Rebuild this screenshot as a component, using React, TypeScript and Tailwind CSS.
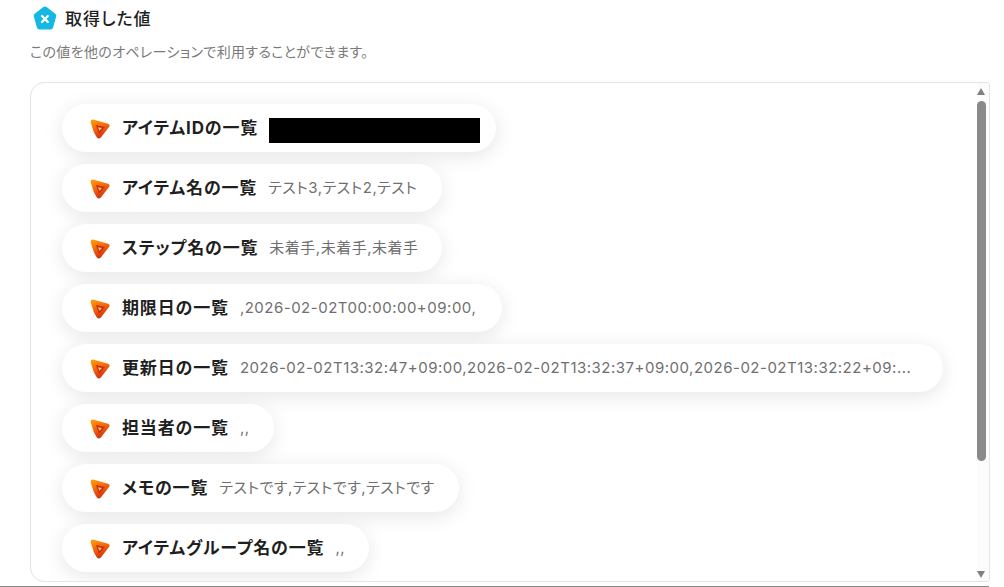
const rows: { label: string; value?: string; w: string; black?: boolean }[] = [
  { label: "アイテムIDの一覧", black: true, w: "w-[434px]" },
  { label: "アイテム名の一覧", value: "テスト3,テスト2,テスト", w: "w-[380px]" },
  { label: "ステップ名の一覧", value: "未着手,未着手,未着手", w: "w-[380px]" },
  { label: "期限日の一覧", value: ",2026-02-02T00:00:00+09:00,", w: "w-[440px]" },
  { label: "更新日の一覧", value: "2026-02-02T13:32:47+09:00,2026-02-02T13:32:37+09:00,2026-02-02T13:32:22+09:...", w: "w-[881px]" },
  { label: "担当者の一覧", value: ",,", w: "w-[212px]" },
  { label: "メモの一覧", value: "テストです,テストです,テストです", w: "w-[397px]" },
  { label: "アイテムグループ名の一覧", value: ",,", w: "w-[307px]" },
];

function PlayIcon() {
  return (
    <svg width="20" height="20" viewBox="0 0 20 20" className="shrink-0 mt-[2px]">
      <defs>
        <linearGradient id="g" x1="0.1" y1="0" x2="0.5" y2="1">
          <stop offset="0" stopColor="#ffa00c" />
          <stop offset="0.5" stopColor="#f4640a" />
          <stop offset="1" stopColor="#cf300c" />
        </linearGradient>
      </defs>
      <path d="M0.6 3 Q0.4 0.3 3.2 0.6 L18 4.8 Q20.6 5.8 19 8 L10.8 18.4 Q8.6 20.5 6.9 18.4 Q4.8 15.6 3.6 12.6 Z" fill="url(#g)" />
      <path d="M6 6 L15 8 L9 14.8 Z" fill="#c4300c" />
      <path d="M8 8.2 L12 9.1 L9.4 12 Z" fill="#ffb27a" />
    </svg>
  );
}

export default function App() {
  return (
    <div className="h-[587px] w-[1004px] overflow-hidden bg-white text-[#1f1f1f] [font-feature-settings:'palt']" style={{ fontFamily: '"Inter", "Noto Sans CJK JP", sans-serif' }}>
      <div className="pl-[33px] pt-[7px] flex items-center gap-[8px] h-[31px]">
        <svg width="24" height="24" viewBox="0 0 24 24" className="shrink-0 mb-[2px]">
          <path d="M10.4 1 Q12 0 13.6 1 L22.3 7.8 Q23.6 8.9 23.2 10.6 L20 21.8 Q19.5 23.6 17.8 23.6 L6.2 23.6 Q4.5 23.6 4 21.8 L0.8 10.6 Q0.4 8.9 1.7 7.8 Z" fill="#13b8e4" />
          <path d="M9 10 L14.8 16 M14.8 10 L9 16" stroke="#fff" strokeWidth="2.3" strokeLinecap="round" />
        </svg>
        <span className="text-[17px] font-medium leading-none tracking-[1px]">取得した値</span>
      </div>
      <p className="ml-[30px] mt-[12px] text-[14px] leading-[18px] tracking-[0.35px] text-[#7a7a7a]">この値を他のオペレーションで利用することができます。</p>
      <div className="ml-[30px] mt-[21px] w-[960px] h-[500px] border border-[#e4e4e4] rounded-l-[14px] rounded-r-[3px] flex overflow-hidden">
        <div className="flex-1 min-w-0 pl-[31px] pt-[21px] flex flex-col gap-[12px]">
          {rows.map((r) => (
            <div key={r.label} className={`${r.w} h-[48px] shrink-0 rounded-full bg-white flex items-center pl-[28px] shadow-[0_4px_20px_rgba(0,0,0,0.1)]`}>
              <PlayIcon />
              <span className="ml-[12px] text-[17px] font-bold leading-none tracking-[0.85px] whitespace-nowrap">{r.label}</span>
              {r.black ? (
                <span className="ml-[11px] w-[211px] h-[25px] mt-[4px] bg-black" />
              ) : (
                <span className="ml-[11px] mb-[2px] text-[15px] tracking-[0.5px] text-[#6f6f6f] whitespace-nowrap leading-none">{r.value}</span>
              )}
            </div>
          ))}
        </div>
        <div className="w-[12px] shrink-0 bg-[#fcfcfc] flex flex-col items-start">
          <div className="mt-[5px] w-0 h-0 border-x-[4.5px] border-x-transparent border-b-[7px] border-b-[#808080]" />
          <div className="mt-[6px] w-[9px] h-[360px] rounded-full bg-[#8a8a8a]" />
          <div className="mt-auto mb-[3px] w-0 h-0 border-x-[4.5px] border-x-transparent border-t-[7px] border-t-[#808080]" />
        </div>
      </div>
      <div className="mt-[4px] w-[989px] h-px bg-[#8a8a8a]" />
    </div>
  );
}
